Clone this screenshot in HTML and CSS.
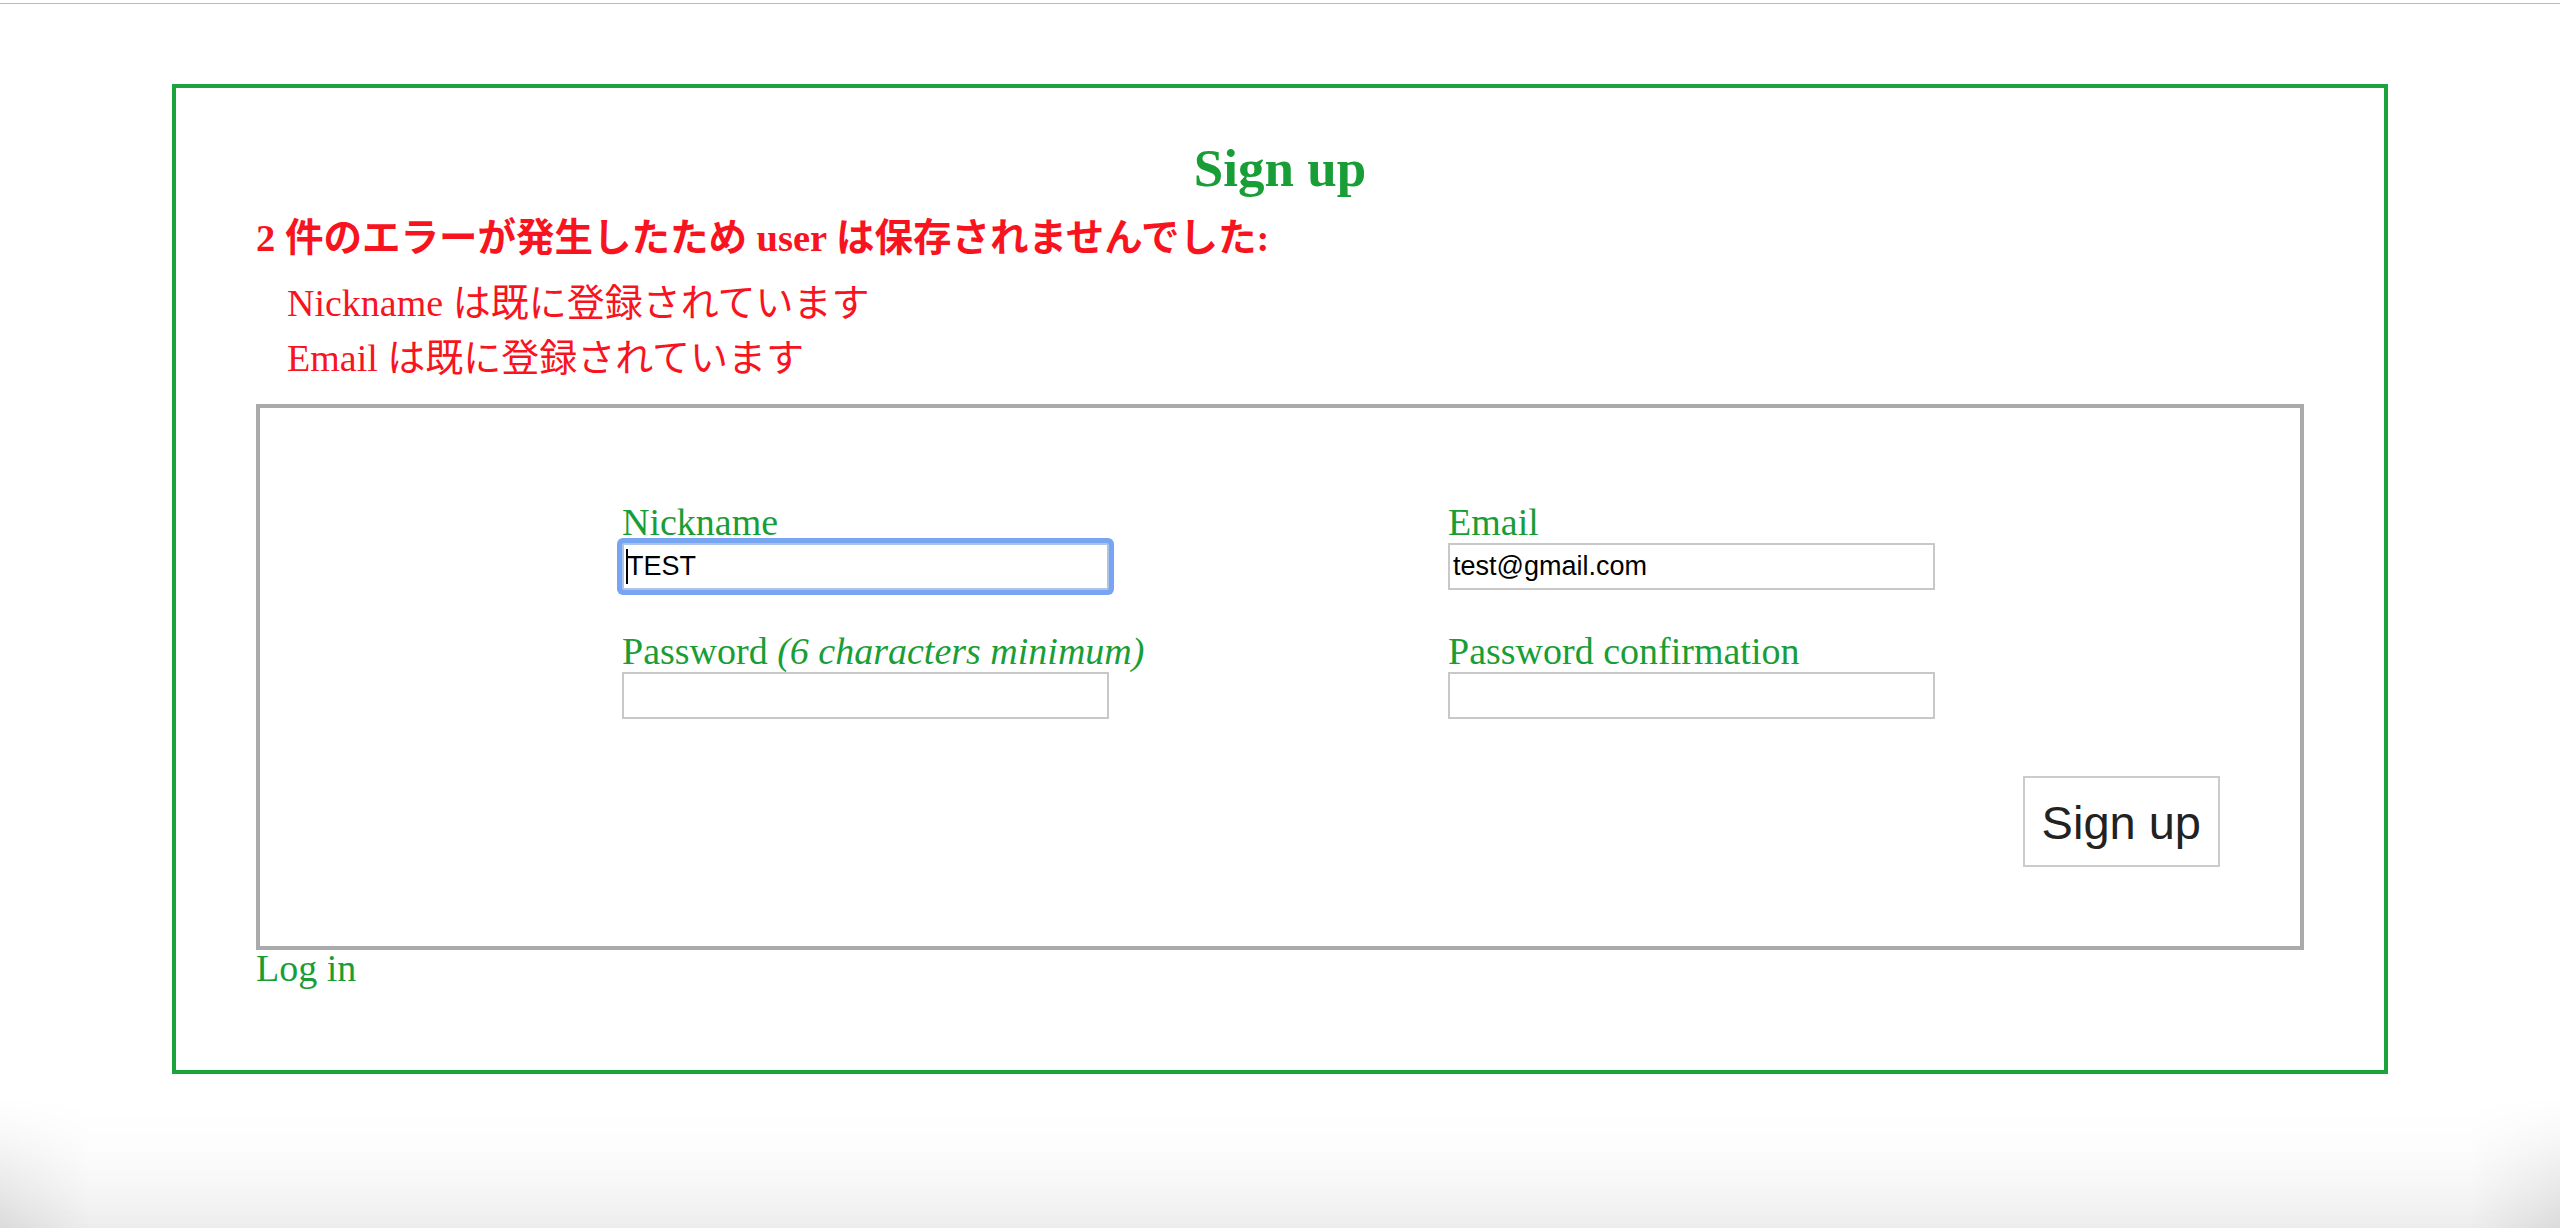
FILE: index.html
```html
<!DOCTYPE html>
<html lang="ja">
<head>
<meta charset="utf-8">
<title>Sign up</title>
<link rel="stylesheet" href="styles.css">
</head>
<body>
<div class="top-line"></div>
<main class="signup">
  <h2 class="title">Sign up</h2>
  <div class="errors">
    <h3 class="errors-heading">2 件のエラーが発生したため user は保存されませんでした:</h3>
    <ul class="errors-list">
      <li>Nickname は既に登録されています</li>
      <li>Email は既に登録されています</li>
    </ul>
  </div>
  <form class="form-box" onsubmit="return false">
    <div class="fields">
      <div class="field">
        <label class="label" for="nickname">Nickname</label>
        <div class="input-wrap">
          <input class="input input-focused" id="nickname" type="text" value="TEST">
          <span class="caret"></span>
        </div>
      </div>
      <div class="field">
        <label class="label" for="email">Email</label>
        <div class="input-wrap">
          <input class="input" id="email" type="text" value="test@gmail.com">
        </div>
      </div>
      <div class="field">
        <label class="label" for="password">Password <em>(6 characters minimum)</em></label>
        <div class="input-wrap">
          <input class="input" id="password" type="password">
        </div>
      </div>
      <div class="field">
        <label class="label" for="password-confirmation">Password confirmation</label>
        <div class="input-wrap">
          <input class="input" id="password-confirmation" type="password">
        </div>
      </div>
    </div>
    <div class="actions">
      <button class="btn" type="submit">Sign up</button>
    </div>
  </form>
  <a class="login-link" href="#">Log in</a>
</main>
<div class="vignette"></div>
</body>
</html>
```

FILE: styles.css
```css
* {
  box-sizing: border-box;
}

html,
body {
  margin: 0;
  background: #ffffff;
}

body {
  font-family: "Liberation Serif", "Noto Sans CJK JP", serif;
  font-size: 38px;
  color: #199e37;
}

.top-line {
  height: 4px;
  border-bottom: 1px solid #b9b9b9;
}

.signup {
  margin: 80px 172px 0;
  border: 4px solid #1ca43c;
  padding: 50px 80px 84px;
}

.title {
  margin: 0;
  text-align: center;
  font-size: 53px;
  line-height: 60px;
  font-weight: bold;
  color: #199e37;
}

.errors {
  color: #f8141e;
}

.errors-heading {
  margin: 15.5px 0 0;
  font-size: 38.5px;
  line-height: 48px;
  font-weight: bold;
}

.errors-list {
  list-style: none;
  margin: 14px 0 0;
  padding: 0 0 0 31px;
  font-size: 38px;
  line-height: 55px;
}

.form-box {
  margin: 18px 0 0;
  border: 4px solid #aaaaaa;
  padding: 93px 80px 79px 362px;
}

.fields {
  display: grid;
  grid-template-columns: 826px 487px;
  row-gap: 40px;
}

.label {
  display: block;
  font-size: 38px;
  line-height: 42px;
  color: #199e37;
}

.label em {
  font-style: italic;
}

.input-wrap {
  position: relative;
  width: 487px;
}

.input {
  display: block;
  width: 487px;
  height: 47px;
  margin: 0;
  border: 2px solid #c8c8c8;
  border-radius: 0;
  padding: 0 3px;
  font-family: "Liberation Sans", Arial, sans-serif;
  font-size: 27px;
  color: #000000;
  background: #ffffff;
  outline: none;
}

.input-focused {
  border-color: #aec3e6;
  border-radius: 2px;
  box-shadow: 0 0 0 5px #77a5f2;
  caret-color: transparent;
}

.caret {
  position: absolute;
  left: 4px;
  top: 6px;
  width: 2px;
  height: 35px;
  background: #000000;
}

.actions {
  display: flex;
  justify-content: flex-end;
  margin-top: 57px;
}

.btn {
  height: 91px;
  margin: 0;
  padding: 3px 17px 0;
  border: 2px solid #cbcbcb;
  border-radius: 0;
  background: #ffffff;
  color: #222222;
  font-family: "Liberation Sans", Arial, sans-serif;
  font-size: 47px;
  line-height: 1;
}

.login-link {
  display: block;
  font-size: 38px;
  line-height: 36px;
  color: #199e37;
  text-decoration: none;
}

.vignette {
  position: fixed;
  left: 0;
  right: 0;
  bottom: 0;
  height: 130px;
  pointer-events: none;
  background:
    linear-gradient(to right, rgba(0, 0, 0, 0.08), rgba(0, 0, 0, 0) 90px),
    linear-gradient(to left, rgba(0, 0, 0, 0.08), rgba(0, 0, 0, 0) 90px),
    linear-gradient(to bottom, rgba(0, 0, 0, 0), rgba(0, 0, 0, 0.07));
  -webkit-mask-image: linear-gradient(to bottom, transparent 0%, rgba(0, 0, 0, 0.6) 55%, #000 100%);
  mask-image: linear-gradient(to bottom, transparent 0%, rgba(0, 0, 0, 0.6) 55%, #000 100%);
}
```
